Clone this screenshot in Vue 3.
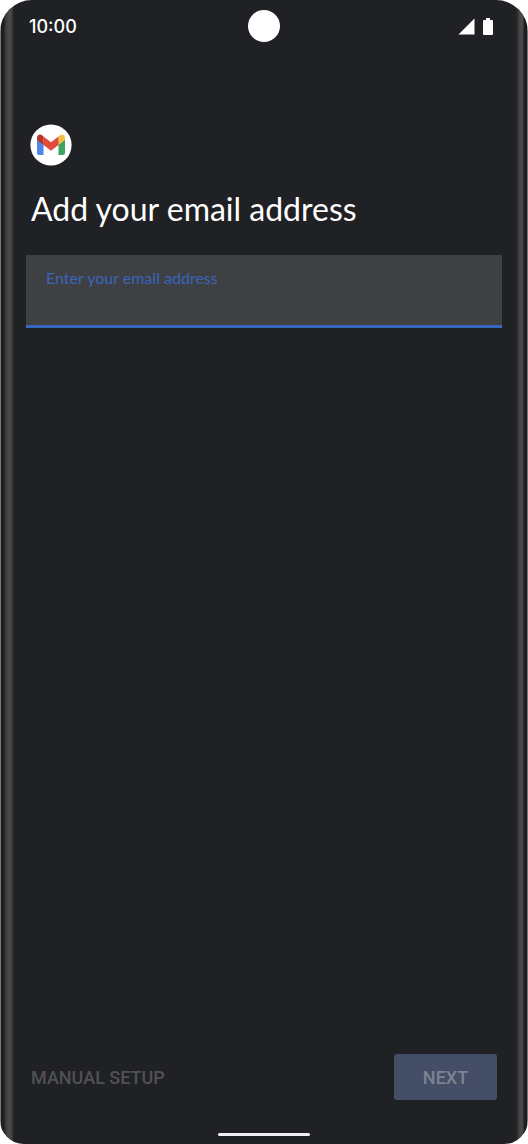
<template>
  <div class="phone">
    <!-- 状态栏 -->
    <header class="status-bar">
      <time class="clock">{{ clock }}</time>
      <span class="camera"></span>
      <div class="status-icons">
        <svg width="17" height="17" viewBox="0 0 17 17" aria-hidden="true">
          <path d="M16.5 0.5V16.5H0.5Z" fill="#fff" />
        </svg>
        <svg width="10" height="17" viewBox="0 0 10 17" aria-hidden="true">
          <path d="M3 0H7V2H9Q10 2 10 3V16Q10 17 9 17H1Q0 17 0 16V3Q0 2 1 2H3Z" fill="#fff" />
        </svg>
      </div>
    </header>

    <form class="setup" @submit.prevent>
      <!-- Gmail 图标 -->
      <svg class="logo" width="42" height="42" viewBox="0 0 42 42" aria-hidden="true">
        <circle cx="21" cy="21" r="20.6" fill="#fff" />
        <path d="M7 14V29Q7 31 9 31H13.5V18Z" fill="#4f86ec" />
        <path d="M28.5 18V31H33Q35 31 35 29V14Z" fill="#3ba55c" />
        <path d="M28.5 12.5L30 11.2C32 9.7 35 11 35 13.8V16L28.5 21Z" fill="#f5bf42" />
        <path d="M13.5 12.5L21 18.3L28.5 12.5V21L21 26.7L13.5 21Z" fill="#e04a3c" />
        <path d="M7 16V13.8C7 11 10 9.7 12 11.2L13.5 12.5V21Z" fill="#b9342b" />
      </svg>

      <h1 class="title">Add your email address</h1>

      <div class="field">
        <label class="field-label" for="email">Enter your email address</label>
        <input id="email" v-model="email" class="field-input" type="email" autocomplete="email" />
      </div>

      <div class="actions">
        <button class="btn btn-text" type="button" :disabled="!email">MANUAL SETUP</button>
        <button class="btn btn-next" type="submit" :disabled="!email">NEXT</button>
      </div>
    </form>

    <!-- 底部手势条 -->
    <footer class="nav-bar">
      <span class="nav-handle"></span>
    </footer>
  </div>
</template>

<script setup>
import { ref } from 'vue'

const clock = '10:00'
const email = ref('')
</script>

<style>
body {
  margin: 0;
  background: #fff;
}
</style>

<style scoped>
.phone {
  display: flex;
  flex-direction: column;
  box-sizing: border-box;
  min-height: 100vh;
  padding: 0 26px;
  border-radius: 32px 32px 24px 24px;
  overflow: hidden;
  color: #fff;
  font-family: Lato, "Noto Sans", sans-serif;
  /* 左右金属边框 */
  background:
    linear-gradient(90deg, #75777a 0 1px, #1c1e20 1px 4px, #353535 5px, #484848 8px, #484848 11px, #202124 14px, transparent 14px) left / 14px 100% no-repeat,
    linear-gradient(270deg, #75777a 0 1px, #1c1e20 1px 4px, #484848 5px, #484848 8px, #353535 10px, #202124 12px, transparent 12px) right / 12px 100% no-repeat,
    #202124;
}

/* 状态栏 */
.status-bar {
  display: grid;
  grid-template-columns: 1fr auto 1fr;
  align-items: center;
  height: 52px;
  padding: 0 9px 0 3px;
}

.clock {
  font-size: 18px;
  font-weight: 500;
  font-family: Inter, sans-serif;
}

.camera {
  width: 32px;
  height: 32px;
  margin-left: 6px;
  border-radius: 50%;
  background: #fff;
}

.status-icons {
  display: flex;
  justify-content: flex-end;
  gap: 8px;
}

/* 表单 */
.setup {
  flex: 1;
  display: flex;
  flex-direction: column;
  padding-top: 72px;
}

.logo {
  margin-left: 4px;
}

.title {
  margin: 22px 5px 25px;
  font-size: 32px;
  line-height: 42px;
  font-weight: 400;
}

.field {
  display: flex;
  flex-direction: column;
  height: 70px;
  border-bottom: 3px solid #3866bd;
  background: #3f4043;
}

.field-label {
  padding: 12px 20px 0;
  font-size: 16px;
  line-height: 22px;
  color: #3866bd;
}

.field-input {
  flex: 1;
  min-height: 0;
  padding: 0 20px;
  border: none;
  outline: none;
  background: transparent;
  color: #fff;
  font: inherit;
}

/* 底部按钮 */
.actions {
  display: flex;
  justify-content: space-between;
  align-items: center;
  margin-top: auto;
  padding: 0 5px;
}

.btn {
  height: 46px;
  padding: 0;
  border: none;
  border-radius: 3px;
  font-family: Roboto, sans-serif;
  font-size: 18px;
  font-weight: 500;
}

.btn-text {
  background: transparent;
  color: #505154;
}

.btn-next {
  width: 103px;
  background: #444e66;
  color: #7c8494;
}

/* 手势条 */
.nav-bar {
  display: flex;
  justify-content: center;
  height: 11px;
  padding-top: 33px;
}

.nav-handle {
  width: 92px;
  height: 3px;
  border-radius: 2px;
  background: #f1f1f1;
}
</style>
